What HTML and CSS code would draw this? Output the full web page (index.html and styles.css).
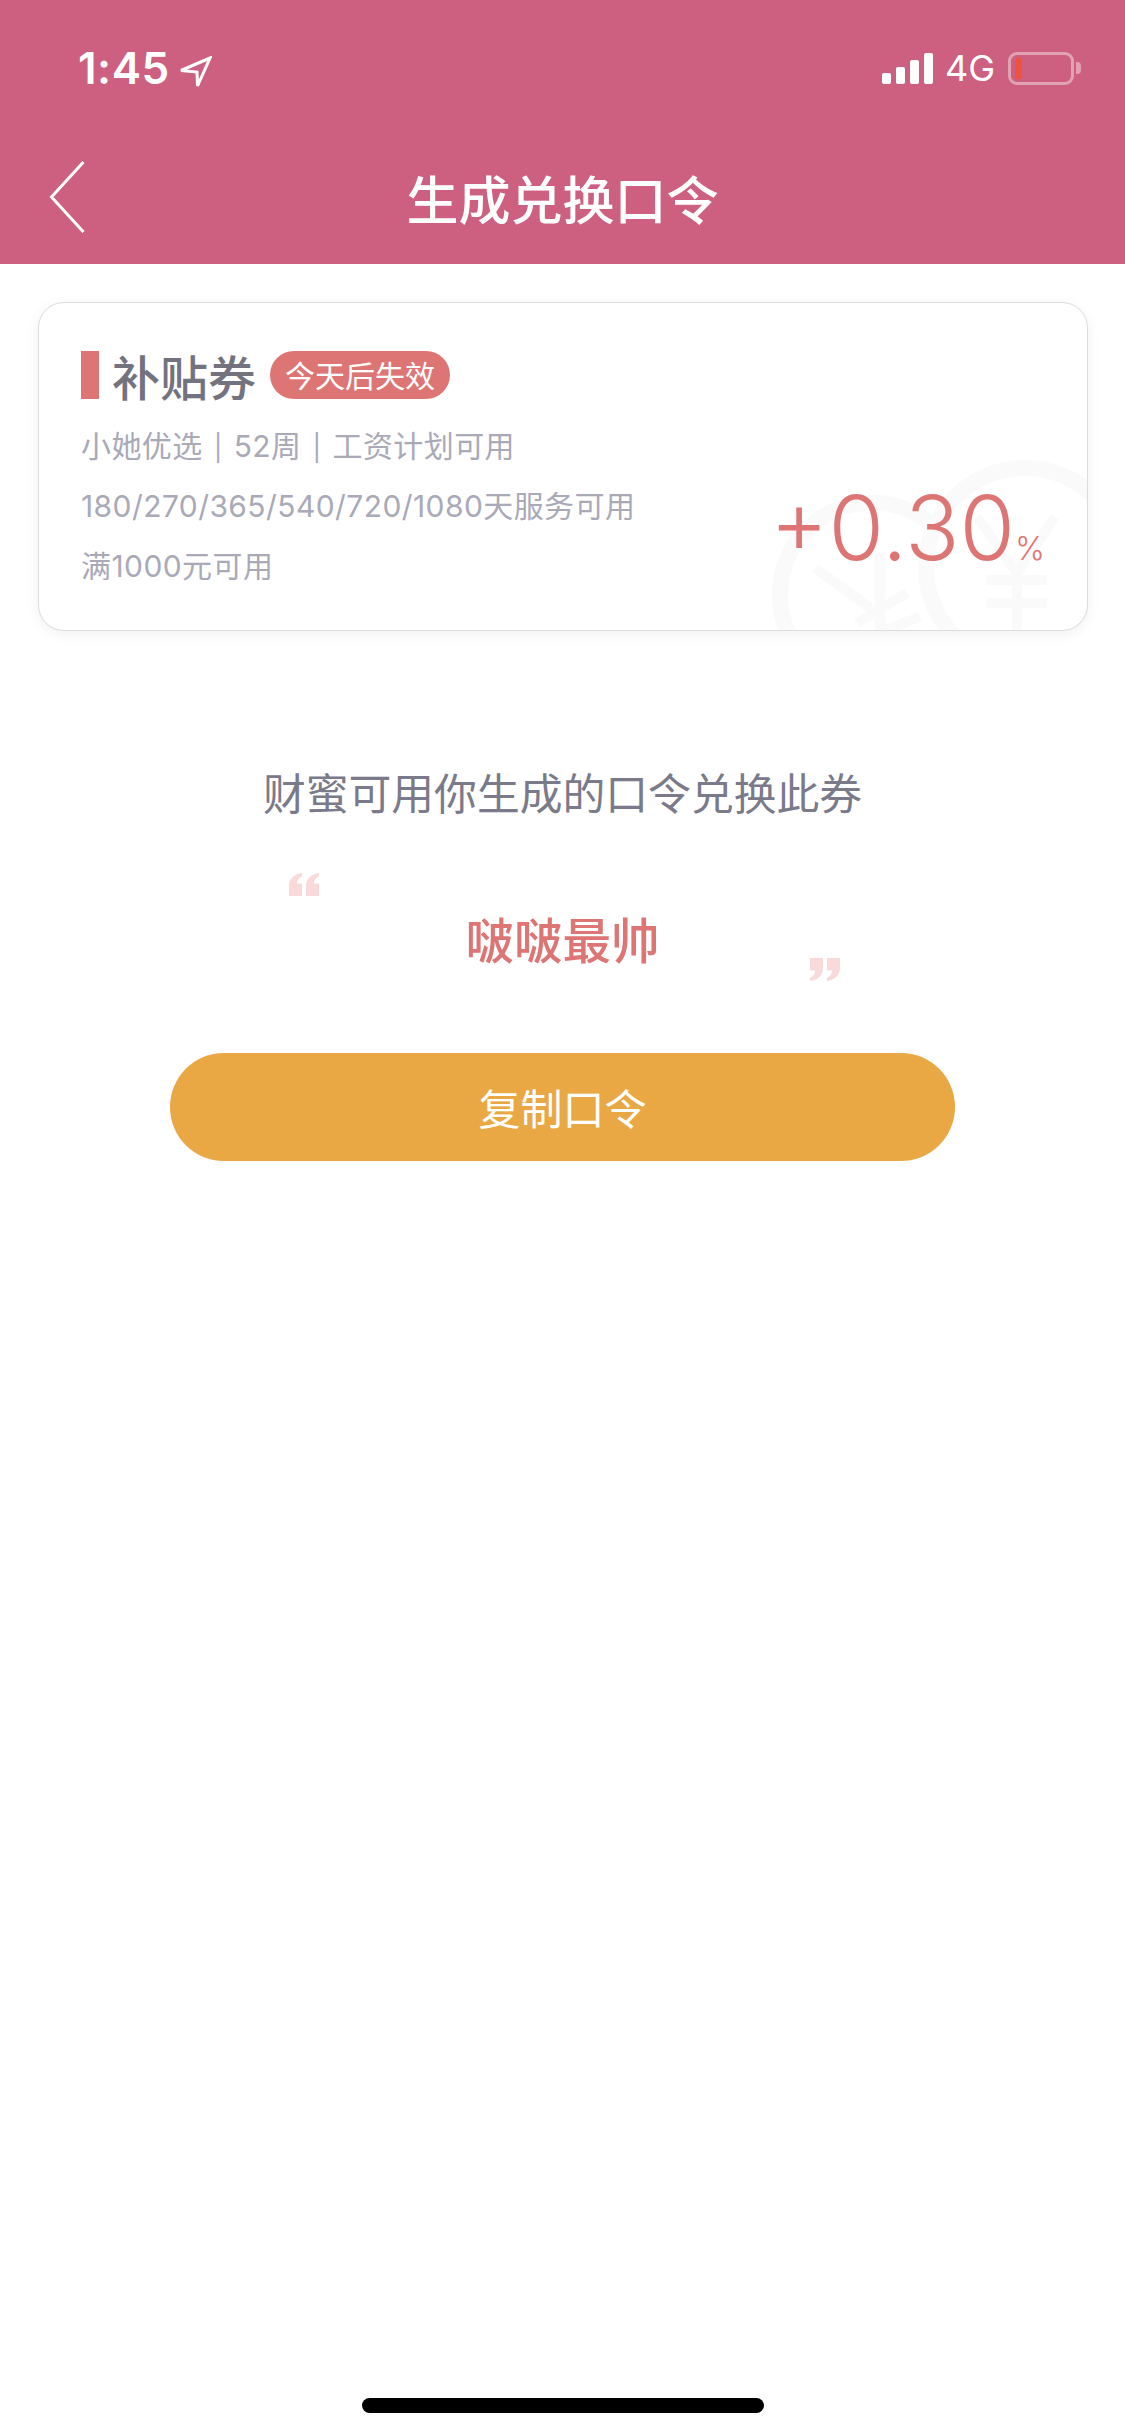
FILE: index.html
```html
<!DOCTYPE html>
<html lang="zh-CN">
<head>
<meta charset="utf-8">
<title>生成兑换口令</title>
<link rel="stylesheet" href="styles.css">
</head>
<body>
<main class="screen">
  <header class="top">
    <div class="status">
      <div class="status-left">
        <span class="time">1:45</span>
        <svg class="loc" width="33" height="32" viewBox="0 0 33 32"><path d="M31 2 L2 14.5 L18 16 L18.5 30 Z" fill="none" stroke="#fff" stroke-width="3" stroke-linejoin="miter"/></svg>
      </div>
      <div class="status-right">
        <div class="signal"><i class="b1"></i><i class="b2"></i><i class="b3"></i><i class="b4"></i></div>
        <span class="net">4G</span>
        <div class="battery"><i class="level"></i></div>
        <i class="cap"></i>
      </div>
    </div>
    <nav class="nav">
      <svg class="back" width="38" height="74" viewBox="0 0 38 74"><path d="M35.5 2 L3.5 37 L35.5 72" fill="none" stroke="#fff" stroke-width="3"/></svg>
      <h1 class="title">生成兑换口令</h1>
    </nav>
  </header>

  <section class="card">
    <svg class="mark" width="380" height="190" viewBox="0 0 380 190">
      <g fill="none" stroke="#fafafa">
        <g stroke-width="16">
          <path d="M90 208 A92 92 0 0 1 225 85"/>
          <circle cx="318" cy="127" r="99"/>
        </g>
        <g stroke-width="10">
          <path d="M108 128 L170 173 M173 113 L173 190 M150 183 L200 153 M178 190 L213 177"/>
          <path d="M270 77 L310 133 L348 77 M310 133 L310 190 M280 140 L340 140 M280 163 L340 163"/>
        </g>
      </g>
    </svg>
    <div class="info">
      <div class="head">
        <i class="bar"></i>
        <span class="name">补贴券</span>
        <span class="tag">今天后失效</span>
      </div>
      <p class="line">小她优选<span class="sep">|</span>52周<span class="sep">|</span>工资计划可用</p>
      <p class="line">180/270/365/540/720/1080天服务可用</p>
      <p class="line">满1000元可用</p>
    </div>
    <div class="value"><span class="num">+0.30</span><span class="pct">%</span></div>
  </section>

  <section class="share">
    <p class="hint">财蜜可用你生成的口令兑换此券</p>
    <div class="code-box">
      <svg class="quote open" width="30" height="23" viewBox="0 0 30 22" preserveAspectRatio="none"><path d="M0 22 L0 12 C0 6 5 1 13 0 L13 3 C10 4 8 7 8 10 L13 10 L13 22 Z M17 22 L17 12 C17 6 22 1 30 0 L30 3 C27 4 25 7 25 10 L30 10 L30 22 Z"/></svg>
      <strong class="code">啵啵最帅</strong>
      <svg class="quote close" width="30" height="23" viewBox="0 0 30 22" preserveAspectRatio="none"><path d="M0 22 L0 12 C0 6 5 1 13 0 L13 3 C10 4 8 7 8 10 L13 10 L13 22 Z M17 22 L17 12 C17 6 22 1 30 0 L30 3 C27 4 25 7 25 10 L30 10 L30 22 Z"/></svg>
    </div>
    <button class="copy">复制口令</button>
  </section>

  <div class="home"></div>
</main>
</body>
</html>
```
FILE: styles.css
```css
* { box-sizing: border-box; }
html, body { margin: 0; padding: 0; background: #fff; }
body { font-family: Inter, "Noto Sans CJK SC", sans-serif; }
.screen { width: 1125px; height: 2436px; display: flex; flex-direction: column; overflow: hidden; }

.top { height: 264px; background: #cd5f80; color: #fff; display: flex; flex-direction: column; }
.status { height: 132px; padding: 45px 44px 0 78px; display: flex; justify-content: space-between; align-items: flex-start; }
.status-left { display: flex; align-items: center; gap: 9px; }
.time { font: 600 44px/46px Inter, sans-serif; letter-spacing: .5px; }
.loc { margin-top: 7px; }
.status-right { display: flex; align-items: center; height: 46px; }
.signal { display: flex; align-items: flex-end; gap: 5px; height: 31px; margin-right: 12px; }
.signal i { display: block; width: 9px; background: #fff; border-radius: 2px; }
.b1 { height: 11px; }
.b2 { height: 17px; }
.b3 { height: 24px; }
.b4 { height: 31px; }
.net { font: 400 36px/46px Inter, sans-serif; margin-right: 13px; }
.battery { width: 66px; height: 33px; border: 3px solid rgba(255,255,255,.42); border-radius: 9px; padding: 3px 4px; }
.level { display: block; width: 7px; height: 21px; background: #ec5440; border-radius: 2px; }
.cap { display: block; width: 5px; height: 12px; margin-left: 2px; background: rgba(255,255,255,.42); border-radius: 0 4px 4px 0; }

.nav { position: relative; height: 132px; display: flex; align-items: center; justify-content: center; }
.back { position: absolute; left: 48px; top: 28px; }
.title { margin: 0; font: 500 52px/72px "Noto Sans CJK SC", sans-serif; }

.card { position: relative; margin: 38px 37px 0 38px; height: 329px; background: #fff; border: 1px solid #dcdcdc; border-radius: 26px; box-shadow: 0 3px 14px rgba(0,0,0,.06); overflow: hidden; display: flex; justify-content: space-between; padding: 48px 42px 0 42px; }
.mark { position: absolute; right: 0; bottom: 0; }
.info { position: relative; }
.head { display: flex; align-items: center; height: 48px; margin-bottom: 17px; }
.bar { display: block; width: 18px; height: 48px; background: #de7575; margin-right: 13px; }
.name { font: 500 48px/46px "Noto Sans CJK SC", sans-serif; color: #73737f; margin-right: 14px; }
.tag { height: 48px; padding: 0 15px; border-radius: 24px; background: #de7575; color: #fff; font: 400 30px/46px "Noto Sans CJK SC", sans-serif; }
.line { margin: 0; height: 60px; font: 400 30px/60px Inter, "Noto Sans CJK SC", sans-serif; letter-spacing: .42px; color: #a9a9b8; white-space: nowrap; }
.sep { display: inline-block; width: 31px; text-align: center; font-size: 26px; }
.value { position: relative; align-self: flex-start; margin-top: 127px; display: flex; align-items: baseline; color: #de7575; }
.num { font: 340 90px/100px Inter, sans-serif; }
.pct { font: 300 32px/100px Inter, sans-serif; }

.share { display: flex; flex-direction: column; align-items: center; }
.hint { margin: 130px 0 0; font: 400 42.8px/60px "Noto Sans CJK SC", sans-serif; color: #7a7a8a; }
.code-box { position: relative; width: 560px; height: 200px; display: flex; align-items: center; justify-content: center; }
.code { font: 500 48.5px/60px "Noto Sans CJK SC", sans-serif; color: #de7575; position: relative; top: 17px; }
.quote { position: absolute; fill: #f9dada; }
.quote.open { left: 6px; top: 52px; }
.quote.close { right: 3px; top: 137px; transform: rotate(180deg); }
.copy { width: 785px; height: 108px; margin-top: 32px; border: 0; border-radius: 54px; background: #e9a843; color: #fff; font: 400 42px/60px "Noto Sans CJK SC", sans-serif; }

.home { width: 402px; height: 15px; margin: auto auto 23px; background: #000; border-radius: 8px; }
```
